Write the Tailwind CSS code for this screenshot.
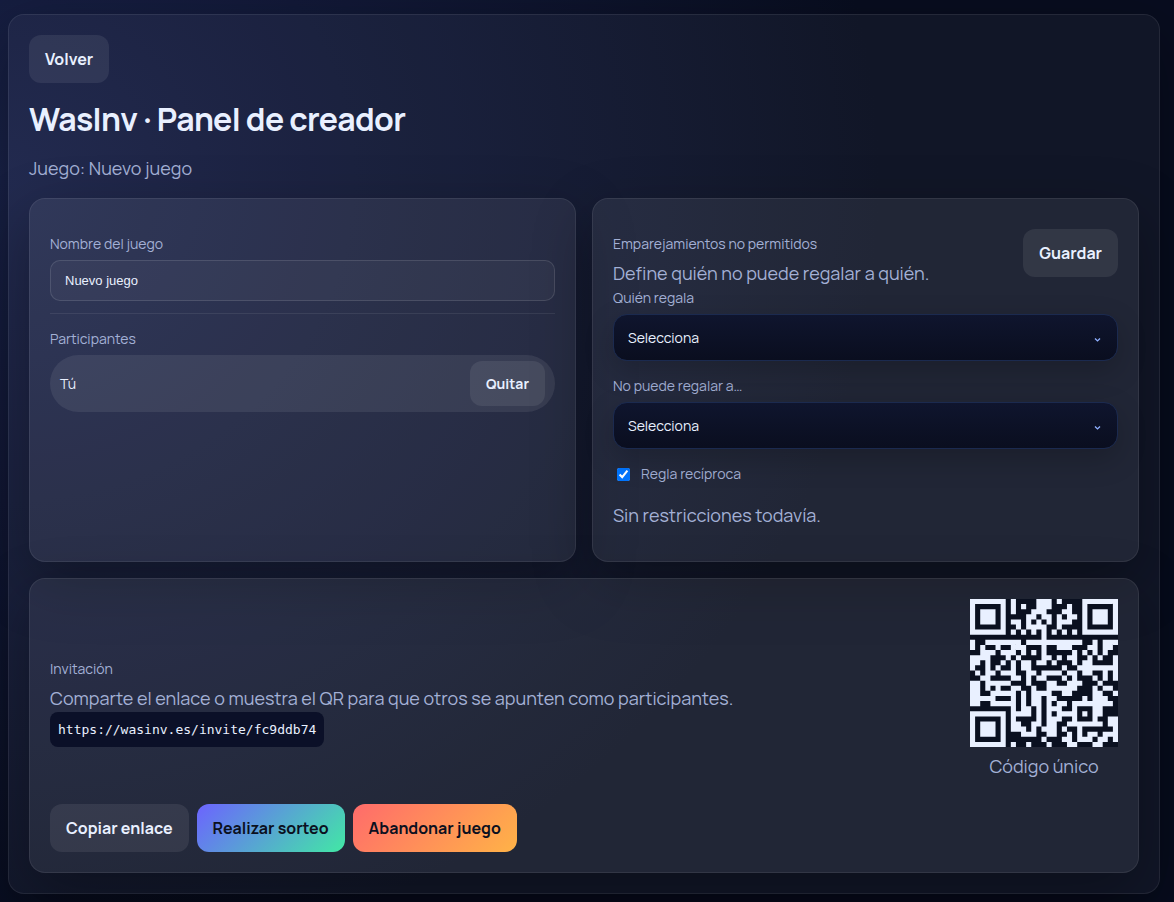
<!DOCTYPE html>
<html lang="es">
<head>
    <meta charset="UTF-8">
    <meta name="viewport" content="width=device-width, initial-scale=1.0">
    <title>WasInv · Panel de creador</title>
    <script src="https://cdn.jsdelivr.net/npm/@tailwindcss/browser@4"></script>
    <style>
        body {
            font-family: Manrope, Inter, sans-serif;
            background-color: #080d1f;
            background-image: radial-gradient(ellipse 880px 800px at 0 180px, #192248 0%, #121938 40%, transparent 100%);
            background-repeat: no-repeat;
        }
    </style>
</head>
<body class="min-h-screen pt-[14px] pb-2 pl-2 pr-[14px] text-[#e9f0ff]">
    <main class="rounded-2xl border border-white/8 bg-white/4 p-5 shadow-[0_20px_60px_rgba(0,0,0,0.35)]">
        <!-- Header -->
        <button type="button" class="h-12 rounded-xl bg-white/8 px-4 font-bold">Volver</button>
        <h1 class="mt-4 text-[32px] leading-10 font-bold tracking-[-0.02em]">WasInv · Panel de creador</h1>
        <p class="mt-4 text-lg leading-[27px] text-[#a3b0d5]">Juego: Nuevo juego</p>

        <div class="mt-4 grid grid-cols-2 gap-4">
            <!-- Game and participants -->
            <section class="rounded-2xl border border-white/8 bg-white/7 px-5 pt-[35px] pb-5 shadow-[0_20px_60px_rgba(0,0,0,0.3)]">
                <label for="game-name" class="block text-sm leading-5 text-[#a3b0d5]">Nombre del juego</label>
                <input id="game-name" type="text" value="Nuevo juego" class="mt-1.5 block h-[41px] w-full rounded-[10px] border border-white/12 bg-white/4 px-3.5 font-['Liberation_Sans'] text-[13px]">
                <hr class="mt-3 border-white/8">
                <h2 class="mt-[15px] text-sm leading-5 text-[#a3b0d5]">Participantes</h2>
                <ul class="mt-1.5">
                    <li class="flex items-center justify-between rounded-full bg-white/8 px-2.5 py-1.5 text-sm">
                        <span>Tú</span>
                        <button type="button" class="h-[45px] rounded-xl bg-white/8 px-4 font-bold">Quitar</button>
                    </li>
                </ul>
            </section>

            <!-- Restrictions -->
            <section class="rounded-2xl border border-white/8 bg-white/7 px-5 pt-[30px] pb-8 shadow-[0_20px_60px_rgba(0,0,0,0.3)]">
                <div class="flex items-start justify-between">
                    <div class="pt-[5px]">
                        <h2 class="text-sm leading-5 text-[#a3b0d5]">Emparejamientos no permitidos</h2>
                        <p class="mt-1.5 text-lg leading-[27px] text-[#a3b0d5]">Define quién no puede regalar a quién.</p>
                    </div>
                    <button type="button" class="h-12 rounded-xl bg-white/8 px-4 font-bold">Guardar</button>
                </div>
                <label for="giver" class="mt-px block text-sm leading-5 text-[#a3b0d5]">Quién regala</label>
                <div class="relative mt-1.5">
                    <select id="giver" class="block h-[47px] w-full appearance-none rounded-[14px] border border-[#1b2a4f] bg-linear-to-b from-[#0f152e] to-[#0a0e1f] px-3.5 text-sm shadow-[0_10px_30px_rgba(0,0,0,0.2)]">
                        <option>Selecciona</option>
                        <option>Tú</option>
                    </select>
                    <svg class="pointer-events-none absolute top-[24px] right-[17px] h-1 w-[7px]" viewBox="0 0 7 4" fill="none" stroke="#8fb0ff" stroke-width="1.4"><path d="M1 .6L3.5 2.9L6 .6"/></svg>
                </div>
                <label for="receiver" class="mt-[15px] block text-sm leading-5 text-[#a3b0d5]">No puede regalar a…</label>
                <div class="relative mt-1.5">
                    <select id="receiver" class="block h-[47px] w-full appearance-none rounded-[14px] border border-[#1b2a4f] bg-linear-to-b from-[#0f152e] to-[#0a0e1f] px-3.5 text-sm shadow-[0_10px_30px_rgba(0,0,0,0.2)]">
                        <option>Selecciona</option>
                        <option>Tú</option>
                    </select>
                    <svg class="pointer-events-none absolute top-[24px] right-[17px] h-1 w-[7px]" viewBox="0 0 7 4" fill="none" stroke="#8fb0ff" stroke-width="1.4"><path d="M1 .6L3.5 2.9L6 .6"/></svg>
                </div>
                <label class="mt-[15px] flex items-center gap-[11px] pl-1 text-sm leading-5 text-[#a3b0d5]">
                    <input type="checkbox" checked class="size-[13px]">
                    Regla recíproca
                </label>
                <p class="mt-[18px] text-lg leading-[27px] text-[#a3b0d5]">Sin restricciones todavía.</p>
            </section>

            <!-- Invitation -->
            <section class="col-span-2 rounded-2xl border border-white/8 bg-white/7 p-5 shadow-[0_20px_60px_rgba(0,0,0,0.3)]">
                <div class="flex items-center justify-between">
                    <div class="pt-[26px]">
                        <h2 class="text-sm leading-5 text-[#a3b0d5]">Invitación</h2>
                        <p class="mt-1.5 text-lg leading-[27px] text-[#a3b0d5]">Comparte el enlace o muestra el QR para que otros se apunten como participantes.</p>
                        <code id="invite-url" class="inline-block rounded-lg bg-[#0b1028] px-2 font-['DejaVu_Sans_Mono'] text-[13px] leading-[35px]">https://wasinv.es/invite/fc9ddb74</code>
                    </div>
                    <figure class="text-center">
                        <svg id="invite-qr" class="size-[148px] bg-[#0a1020]" viewBox="0 0 29 29" role="img" aria-labelledby="qr-caption"></svg>
                        <figcaption id="qr-caption" class="mt-1.5 text-lg leading-[27px] text-[#a3b0d5]">Código único</figcaption>
                    </figure>
                </div>
                <div class="mt-6 flex gap-2">
                    <button type="button" class="h-12 rounded-xl bg-white/8 px-4 font-bold">Copiar enlace</button>
                    <button type="button" class="h-12 rounded-xl bg-[linear-gradient(135deg,#6c63ff,#42e8a5)] px-4 font-bold text-[#0b1020]">Realizar sorteo</button>
                    <button type="button" class="h-12 rounded-xl bg-[linear-gradient(135deg,#ff6b6b,#ffb347)] px-4 font-bold text-[#0b1020]">Abandonar juego</button>
                </div>
            </section>
        </div>
    </main>

    <script>
        // QR code version 3, level M, mask 6: 44 data codewords + 26 of error correction
        const SIZE = 29, DATA = 44, ECC = 26;

        function gfMul(a, b) {
            let r = 0;
            for (let i = 7; i >= 0; i--) {
                r = (r << 1) ^ ((r >> 7) * 0x11d);
                r ^= ((b >> i) & 1) * a;
            }
            return r;
        }

        function codewords(text) {
            const bytes = [...new TextEncoder().encode(text)];
            let bits = '0100' + bytes.length.toString(2).padStart(8, '0');
            bytes.forEach(b => bits += b.toString(2).padStart(8, '0'));
            bits += '0000';
            const data = bits.match(/.{8}/g).map(b => parseInt(b, 2));
            for (let pad = 0xec; data.length < DATA; pad ^= 0xfd) data.push(pad);

            // Generator polynomial
            const gen = new Array(ECC).fill(0);
            gen[ECC - 1] = 1;
            let root = 1;
            for (let i = 0; i < ECC; i++) {
                for (let j = 0; j < ECC; j++) {
                    gen[j] = gfMul(gen[j], root);
                    if (j + 1 < ECC) gen[j] ^= gen[j + 1];
                }
                root = gfMul(root, 2);
            }
            // Remainder
            const rem = new Array(ECC).fill(0);
            data.forEach(b => {
                const f = b ^ rem.shift();
                rem.push(0);
                gen.forEach((g, i) => rem[i] ^= gfMul(g, f));
            });
            return data.concat(rem);
        }

        function buildMatrix(text) {
            const m = Array.from({ length: SIZE }, () => new Array(SIZE).fill(null));
            const set = (r, c, v) => { if (r >= 0 && c >= 0 && r < SIZE && c < SIZE) m[r][c] = v ? 1 : 0; };

            // Timing, finder and alignment patterns
            for (let i = 0; i < SIZE; i++) { set(6, i, i % 2 === 0); set(i, 6, i % 2 === 0); }
            [[3, 3], [3, SIZE - 4], [SIZE - 4, 3]].forEach(([r, c]) => {
                for (let y = -4; y <= 4; y++) for (let x = -4; x <= 4; x++) {
                    const d = Math.max(Math.abs(x), Math.abs(y));
                    set(r + y, c + x, d !== 2 && d !== 4);
                }
            });
            for (let y = -2; y <= 2; y++) for (let x = -2; x <= 2; x++) {
                set(22 + y, 22 + x, Math.max(Math.abs(x), Math.abs(y)) !== 1);
            }

            // Format information
            const f = [...'100111110010111'].map(Number);
            for (let i = 0; i < 15; i++) {
                if (i < 8) set(8, i < 6 ? i : i + 1, f[i]);
                else set(i === 8 ? 7 : 14 - i, 8, f[i]);
                if (i < 7) set(SIZE - 1 - i, 8, f[i]);
                else set(8, SIZE - 15 + i, f[i]);
            }
            set(SIZE - 8, 8, 1);

            // Data, zigzag from the bottom right corner
            const bits = codewords(text).map(b => b.toString(2).padStart(8, '0')).join('');
            let k = 0, up = true;
            for (let right = SIZE - 1; right >= 1; right -= 2) {
                if (right === 6) right = 5;
                for (let v = 0; v < SIZE; v++) {
                    const r = up ? SIZE - 1 - v : v;
                    for (let c = right; c > right - 2; c--) {
                        if (m[r][c] !== null) continue;
                        const mask = ((r * c) % 2 + (r * c) % 3) % 2 === 0;
                        m[r][c] = Number(bits[k++] || 0) ^ (mask ? 1 : 0);
                    }
                }
                up = !up;
            }
            return m;
        }

        // Draw the modules as one path
        const matrix = buildMatrix(document.getElementById('invite-url').textContent);
        let d = '';
        matrix.forEach((row, y) => row.forEach((on, x) => { if (on) d += `M${x} ${y}h1v1h-1z`; }));
        const path = document.createElementNS('http://www.w3.org/2000/svg', 'path');
        path.setAttribute('d', d);
        path.setAttribute('fill', '#e9f0ff');
        document.getElementById('invite-qr').appendChild(path);
    </script>
</body>
</html>
